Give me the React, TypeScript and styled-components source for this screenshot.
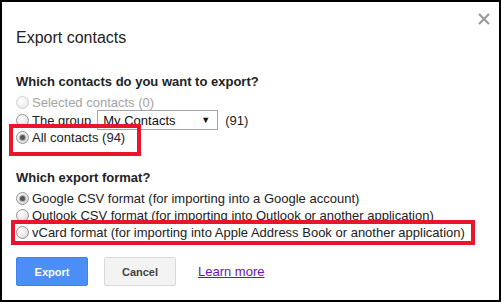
import styled, { createGlobalStyle } from "styled-components";

interface Box {
  top: number;
  right: number;
  bottom: number;
  left: number;
}

interface Option {
  label: string;
  checked?: boolean;
  disabled?: boolean;
  box?: Box;
}

const GlobalStyle = createGlobalStyle`
  html, body {
    margin: 0;
    padding: 0;
    background: #fff;
  }
  body {
    font-family: "Liberation Sans", Arial, sans-serif;
  }
`;

const Dialog = styled.div`
  box-sizing: border-box;
  width: 501px;
  height: 302px;
  border: 2px solid #000;
  background: #fff;
  padding-left: 14px;
  color: #222;
`;

const Header = styled.div`
  display: flex;
  justify-content: space-between;
  align-items: flex-start;
`;

const Title = styled.h1`
  margin: 27px 0 0;
  font-size: 16px;
  line-height: 18px;
  font-weight: normal;
  color: #222;
`;

const Close = styled.button`
  display: flex;
  margin: 11px 9px 0 0;
  padding: 0;
  border: 0;
  background: none;
  width: 12px;
  height: 12px;
`;

const Heading = styled.h2<{ $top: number }>`
  margin: ${(p) => p.$top}px 0 5px;
  font-size: 13px;
  line-height: 15px;
  font-weight: bold;
  color: #222;
`;

const Row = styled.div<{ $disabled?: boolean; $box?: Box }>`
  position: relative;
  display: flex;
  align-items: center;
  width: fit-content;
  min-height: 17px;
  font-size: 13px;
  line-height: 15px;
  color: ${(p) => (p.$disabled ? "#a3a3a3" : "#222")};

  ${(p) =>
    p.$box &&
    `
    &::after {
      content: "";
      position: absolute;
      top: ${p.$box.top}px;
      right: ${p.$box.right}px;
      bottom: ${p.$box.bottom}px;
      left: ${p.$box.left}px;
      border: 4px solid #e8152b;
      pointer-events: none;
      z-index: 2;
    }
  `}
`;

const Radio = styled.span<{ $checked?: boolean; $disabled?: boolean }>`
  position: relative;
  box-sizing: border-box;
  flex-shrink: 0;
  width: 13px;
  height: 13px;
  margin-right: 3px;
  border-radius: 50%;
  border: 1px solid ${(p) => (p.$disabled ? "#cfcfcf" : "#959595")};
  background: ${(p) =>
    p.$disabled
      ? "radial-gradient(circle at 35% 30%, #fff 0%, #f0f0f0 60%, #e4e4e4 100%)"
      : "radial-gradient(circle at 35% 30%, #fff 0%, #e6e6e6 60%, #cfcfcf 100%)"};

  &::after {
    content: "";
    display: ${(p) => (p.$checked ? "block" : "none")};
    position: absolute;
    top: 3px;
    left: 3px;
    width: 5px;
    height: 5px;
    border-radius: 50%;
    background: #555;
    box-shadow: 0 0 1px 1px rgba(90, 90, 90, 0.45);
  }
`;

const SelectBox = styled.div`
  box-sizing: border-box;
  display: flex;
  align-items: center;
  justify-content: space-between;
  width: 121px;
  height: 20px;
  margin: -1px 7px -1px 6px;
  padding: 0 7px 0 5px;
  border: 1px solid #a4a4a4;
  background: #fff;
  color: #111;
`;

const Arrow = styled.span`
  font-size: 9px;
  color: #111;
`;

const Buttons = styled.div`
  display: flex;
  align-items: center;
  gap: 16px;
  margin-top: 16px;
`;

const Button = styled.button<{ $primary?: boolean }>`
  box-sizing: border-box;
  width: 72px;
  height: 29px;
  padding: 0;
  border-radius: 2px;
  font-family: "Liberation Sans", Arial, sans-serif;
  font-size: 11px;
  font-weight: bold;
  border: 1px solid ${(p) => (p.$primary ? "#3d82f0" : "#d9d9d9")};
  background: ${(p) => (p.$primary ? "#4c8ef5" : "#f3f3f3")};
  color: ${(p) => (p.$primary ? "#fff" : "#444")};
`;

const LearnMore = styled.a`
  margin-left: 6px;
  font-size: 13px;
  color: #6611cc;
  text-decoration: underline;
`;

const contactOptions: Option[] = [
  { label: "Selected contacts (0)", disabled: true },
];

const formatOptions: Option[] = [
  { label: "Google CSV format (for importing into a Google account)", checked: true },
  { label: "Outlook CSV format (for importing into Outlook or another application)" },
  {
    label: "vCard format (for importing into Apple Address Book or another application)",
    box: { top: -4, right: -10, bottom: -4, left: -5 },
  },
];

const OptionRow = ({ option }: { option: Option }) => (
  <Row $disabled={option.disabled} $box={option.box}>
    <Radio $checked={option.checked} $disabled={option.disabled} />
    {option.label}
  </Row>
);

const App = () => {
  return (
    <>
      <GlobalStyle />
      <Dialog>
        <Header>
          <Title>Export contacts</Title>
          <Close aria-label="Close">
            <svg width="12" height="12" viewBox="0 0 12 12">
              <path d="M1 1 L11 11 M11 1 L1 11" stroke="#9a9a9a" strokeWidth="2.2" />
            </svg>
          </Close>
        </Header>

        <Heading $top={27}>Which contacts do you want to export?</Heading>
        {contactOptions.map((option) => (
          <OptionRow key={option.label} option={option} />
        ))}
        <Row>
          <Radio />
          The group
          <SelectBox>
            My Contacts
            <Arrow>▼</Arrow>
          </SelectBox>
          (91)
        </Row>
        <OptionRow
          option={{
            label: "All contacts (94)",
            checked: true,
            box: { top: -5, right: -16, bottom: -10, left: -7 },
          }}
        />

        <Heading $top={24}>Which export format?</Heading>
        {formatOptions.map((option) => (
          <OptionRow key={option.label} option={option} />
        ))}

        <Buttons>
          <Button $primary>Export</Button>
          <Button>Cancel</Button>
          <LearnMore href="#">Learn more</LearnMore>
        </Buttons>
      </Dialog>
    </>
  );
};

export default App;
